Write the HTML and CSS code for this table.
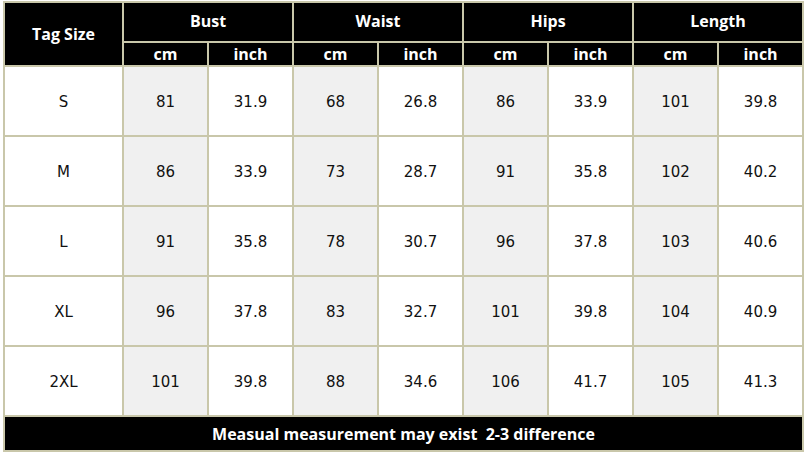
FILE: index.html
```html
<!DOCTYPE html>
<html>
<head>
<meta charset="utf-8">
<link rel="stylesheet" href="styles.css">
</head>
<body>
<table class="size-table">
  <colgroup>
    <col class="c-tag">
    <col class="c-val"><col class="c-val"><col class="c-val"><col class="c-val">
    <col class="c-val"><col class="c-val"><col class="c-val"><col class="c-val">
  </colgroup>
  <thead>
    <tr class="h1">
      <th rowspan="2" class="tag-head">Tag Size</th>
      <th colspan="2">Bust</th>
      <th colspan="2">Waist</th>
      <th colspan="2">Hips</th>
      <th colspan="2">Length</th>
    </tr>
    <tr class="h2">
      <th>cm</th><th>inch</th>
      <th>cm</th><th>inch</th>
      <th>cm</th><th>inch</th>
      <th>cm</th><th>inch</th>
    </tr>
  </thead>
  <tbody>
    <tr>
      <td class="tag">S</td>
      <td class="cm">81</td><td>31.9</td>
      <td class="cm">68</td><td>26.8</td>
      <td class="cm">86</td><td>33.9</td>
      <td class="cm">101</td><td>39.8</td>
    </tr>
    <tr>
      <td class="tag">M</td>
      <td class="cm">86</td><td>33.9</td>
      <td class="cm">73</td><td>28.7</td>
      <td class="cm">91</td><td>35.8</td>
      <td class="cm">102</td><td>40.2</td>
    </tr>
    <tr>
      <td class="tag">L</td>
      <td class="cm">91</td><td>35.8</td>
      <td class="cm">78</td><td>30.7</td>
      <td class="cm">96</td><td>37.8</td>
      <td class="cm">103</td><td>40.6</td>
    </tr>
    <tr>
      <td class="tag">XL</td>
      <td class="cm">96</td><td>37.8</td>
      <td class="cm">83</td><td>32.7</td>
      <td class="cm">101</td><td>39.8</td>
      <td class="cm">104</td><td>40.9</td>
    </tr>
    <tr>
      <td class="tag">2XL</td>
      <td class="cm">101</td><td>39.8</td>
      <td class="cm">88</td><td>34.6</td>
      <td class="cm">106</td><td>41.7</td>
      <td class="cm">105</td><td>41.3</td>
    </tr>
  </tbody>
  <tfoot>
    <tr>
      <td colspan="9" class="foot">Measual measurement may exist&nbsp; 2-3 difference</td>
    </tr>
  </tfoot>
</table>
</body>
</html>
```

FILE: styles.css
```css
html, body {
  margin: 0;
  padding: 0;
  background: #ffffff;
}

body {
  padding: 1px 0 0 3px;
}

.size-table {
  border-collapse: separate;
  border-spacing: 0;
  table-layout: fixed;
  width: 801px;
  border-left: 2px solid #c9c7aa;
  border-top: 2px solid #c9c7aa;
}

.c-tag { width: 119px; }
.c-val { width: 85px; }

.size-table th,
.size-table td {
  box-sizing: border-box;
  border-right: 2px solid #c9c7aa;
  border-bottom: 2px solid #c9c7aa;
  padding: 0;
  text-align: center;
  vertical-align: middle;
}

.size-table th {
  background: #000000;
  color: #ffffff;
  font-family: "Open Sans", "DejaVu Sans", sans-serif;
  font-weight: 700;
  font-size: 16px;
  line-height: 20px;
}

.h1 th {
  height: 40px;
  padding-bottom: 2px;
}

.h1 th.tag-head {
  height: auto;
  padding-bottom: 0;
}

.h2 th {
  height: 24px;
}

.size-table td {
  height: 70px;
  background: #ffffff;
  color: #111111;
  font-family: "DejaVu Sans", "Liberation Sans", sans-serif;
  font-size: 15px;
  padding-top: 2px;
}

.size-table td.cm {
  background: #f0f0f0;
}

.size-table td.foot {
  height: 35px;
  padding-top: 0;
  background: #000000;
  color: #ffffff;
  font-family: "Open Sans", "DejaVu Sans", sans-serif;
  font-weight: 700;
  font-size: 16px;
}
```
